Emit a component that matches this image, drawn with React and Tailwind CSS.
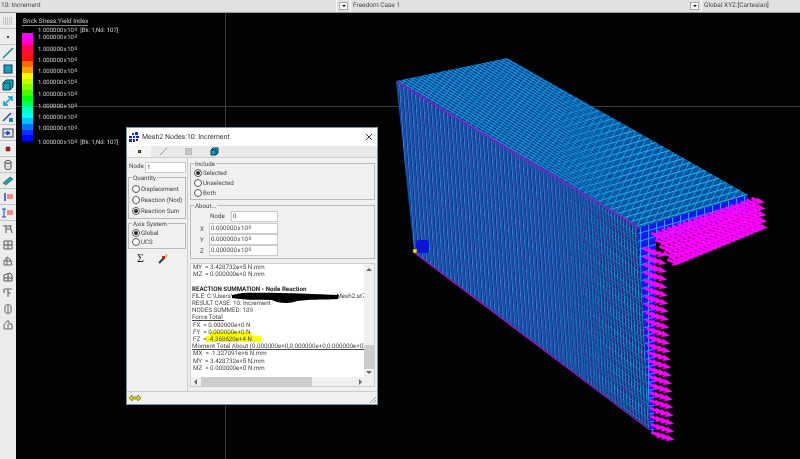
import React from 'react';

const legendRows = [
    { gap: 'mt-[1px]', extra: true },
    { gap: 'mt-[-1px]' }, { gap: 'mt-[4px]' }, { gap: 'mt-[3px]' }, { gap: 'mt-[3px]' }, { gap: 'mt-[3px]' },
    { gap: 'mt-[4px]' }, { gap: 'mt-[4px]' }, { gap: 'mt-[3px]' }, { gap: 'mt-[3px]' },
    { gap: 'mt-[6px]', extra: true },
];

const legendColors = ['#ff00ff', '#ff00d8', '#ff0060', '#ff1020', '#ff1010', '#ff6a00', '#ffa000', '#ffff00', '#c0ff00', '#80ff00', '#40ff00', '#00ff00', '#00ff60', '#00ffc0', '#00ffff', '#00c0ff', '#0070ff', '#0030ff', '#0000ff'];

const Power = ({ value, exp }) => (
    <span className="[word-spacing:-1px]">{value} x 10<sup className="text-[5px] relative top-[-1px] align-baseline ml-[.5px]">{exp}</sup></span>
);

const Tool = ({ children, sep }) => (
    <div className={`h-4 w-full shrink-0 flex items-center justify-center ${sep ? 'border-b border-[#c4c4c4]' : ''}`}>
        <svg width="12" height="12" viewBox="0 0 12 12">{children}</svg>
    </div>
);

const Radio = ({ on, label }) => (
    <div className="flex items-center gap-[1px] h-[8px] leading-[8px]">
        <span className="w-[8px] h-[8px] shrink-0 rounded-full border border-[#555] bg-white flex items-center justify-center">
            {on && <span className="w-[4px] h-[4px] rounded-full bg-[#222]" />}
        </span>
        <span className="whitespace-nowrap">{label}</span>
    </div>
);

const Group = ({ title, className = '', children }) => (
    <div className={`relative border border-[#b9b9b9] ${className}`}>
        <span className="absolute left-[3px] top-[-4px] bg-[#f0f0f0] leading-[8px] px-[1px]">{title}</span>
        {children}
    </div>
);

const Combo = ({ className, label }) => (
    <div className={`flex items-center h-full ${className}`}>
        <div className="w-[9px] h-[8px] bg-white border border-[#aaa] flex items-center justify-center mx-[2px]">
            <span className="w-0 h-0 border-x-[2px] border-t-[2px] border-x-transparent border-t-black" />
        </div>
        <div className="flex-1 h-full pl-[2px] border-l border-white flex items-center">{label}</div>
    </div>
);

// the L shaped mesh, drawn with repeating patterns and a generated set of load arrows
const Model = () => {
    const arrows = [];
    for (let r = 0; r < 5; r++) {
        for (let i = 0; i < 20; i++) {
            const t = i / 19;
            arrows.push([652 + t * 100 + r * 4 * (1 - t * 0.8), 232 - t * 35 + r * 6.6 - t * r * 0.2]);
        }
    }
    for (let i = 0; i < 24; i++) {
        for (let c = 0; c < 3; c++) {
            const y = 247 + i * 8;
            arrows.push([644 + (y - 260) * 0.046 + c * 5, y + c * 1.5]);
        }
    }
    return (
        <svg className="absolute left-0 top-0" width="784" height="446" viewBox="16 13 784 446">
            <defs>
                <pattern id="frontMesh" width="4" height="4" patternUnits="userSpaceOnUse" patternTransform="skewY(34) skewX(4)">
                    <rect width="4" height="4" fill="#0a2c80" />
                    <path d="M0.5 0V4" stroke="#109cd0" strokeWidth="1.2" />
                    <path d="M2.5 0V4" stroke="#1268c0" strokeWidth="1" />
                    <path d="M0 1.5H4" stroke="#b020d8" strokeWidth="0.9" strokeDasharray="1.4 2.6" />
                </pattern>
                <pattern id="frontNear" width="6" height="7" patternUnits="userSpaceOnUse" patternTransform="skewY(37) skewX(3)">
                    <rect width="6" height="7" fill="#0a2a78" />
                    <path d="M0.5 0V7M3.5 0V7" stroke="#1098c8" strokeWidth="1" />
                    <path d="M0 3.5H6" stroke="#a01ccc" strokeWidth="1" strokeDasharray="2 2" />
                    <path d="M0 .5H6" stroke="#1484c0" strokeWidth=".8" />
                </pattern>
                <pattern id="topMesh" width="5" height="3" patternUnits="userSpaceOnUse" patternTransform="skewY(30) skewX(-30)">
                    <rect width="5" height="3" fill="#083e9c" />
                    <path d="M0 .5H5" stroke="#14b8dc" strokeWidth=".9" />
                    <path d="M1 0V3" stroke="#0b8ecb" strokeWidth="1" />
                </pattern>
                <pattern id="topNear" width="8" height="6" patternUnits="userSpaceOnUse" patternTransform="skewY(-16) skewX(-30)">
                    <rect width="8" height="6" fill="#0850a8" />
                    <path d="M0 .5H8" stroke="#18c0e0" strokeWidth="1" />
                    <path d="M1 0V6" stroke="#18b0d8" strokeWidth="1" />
                </pattern>
                <pattern id="endMesh" width="8" height="8" patternUnits="userSpaceOnUse" patternTransform="skewY(-16)">
                    <rect width="8" height="8" fill="#1515f0" />
                    <path d="M0 .5H8M.5 0V8" stroke="#28a0f0" strokeWidth="1" />
                </pattern>
                {/* fades the coarser near mesh into the dense far one */}
                <linearGradient id="nearFade" gradientUnits="userSpaceOnUse" x1="540" y1="0" x2="630" y2="0">
                    <stop offset="0" stopColor="#000" />
                    <stop offset="1" stopColor="#fff" />
                </linearGradient>
                <mask id="nearMask" maskUnits="userSpaceOnUse" x="396" y="50" width="400" height="400">
                    <rect x="396" y="50" width="400" height="400" fill="url(#nearFade)" />
                </mask>
            </defs>
            {/* top slab */}
            <polygon points="396,81 507,58 748,195 638,228" fill="url(#topMesh)" />
            <polygon points="396,81 507,58 748,195 638,228" fill="url(#topNear)" mask="url(#nearMask)" />
            {/* main face */}
            <polygon points="396,81 638,228 650,429 414,252" fill="url(#frontMesh)" />
            <polygon points="396,81 638,228 650,429 414,252" fill="url(#frontNear)" mask="url(#nearMask)" />
            {/* end faces */}
            <polygon points="638,228 748,195 749,210 656,242 654,434 650,429" fill="url(#endMesh)" />
            <path d="M397 82L640 228" stroke="#7a20c8" strokeWidth="2" />
            <path d="M415 253L650 430" stroke="#8a18c0" strokeWidth="1.5" />
            <g>
                {arrows.map(([x, y], i) => (
                    <path key={i} d={`M${x} ${y}L${x + 6} ${y + 2.6}L${x + 5} ${y + 0.6}L${x + 12.5} ${y + 5.5}L${x + 4} ${y + 7}L${x + 5.5} ${y + 5}L${x - 1} ${y + 2.4}z`} fill="#ff00ff" stroke="#ff00ff" strokeWidth=".3" />
                ))}
            </g>
            <rect x="416" y="240" width="13" height="13" rx="3" fill="#0a12d8" />
            <rect x="413" y="249" width="4" height="4" fill="#f5e400" stroke="#333" strokeWidth="0.5" />
        </svg>
    );
};

export default function App() {
    return (
        <div className="w-[800px] h-[459px] overflow-hidden bg-black flex flex-col font-['Roboto',sans-serif] text-[6.2px] text-[#444] [text-rendering:geometricPrecision] opacity-[.99]">
            {/* top combo strip */}
            <div className="h-[13px] shrink-0 bg-[#e1e1e1] flex items-center text-[6.5px] text-[#444] border-b border-[#999]">
                <div className="w-[337px] pl-[1px] border-r border-white h-full flex items-center">10: Increment</div>
                <Combo className="w-[351px]" label="Freedom Case 1" />
                <Combo className="flex-1" label="Global XYZ:[Cartesian]" />
            </div>
            <div className="flex-1 flex min-h-0">
                {/* left toolbar */}
                <div className="w-4 shrink-0 bg-[#ececec] flex flex-col">
                    <Tool sep><path d="M1 3h10M1 5h10M1 7h10M1 9h10" stroke="#999" strokeDasharray="1 1" /></Tool>
                    <Tool sep><rect x="5" y="5" width="2" height="2" fill="#444" /></Tool>
                    <Tool sep><path d="M1 11L11 1" stroke="#0e7f8f" strokeWidth="1.2" /></Tool>
                    <Tool sep><rect x="2" y="2" width="8" height="8" fill="#00a9b5" stroke="#235" /></Tool>
                    <Tool sep><path d="M1 4h7v7H1zM1 4l3-3h7v7l-3 3" fill="#00a9b5" stroke="#235" /></Tool>
                    <Tool sep><path d="M2 10L10 2M6 2h4v4M2 6v4h4" fill="none" stroke="#00a0d0" strokeWidth="1.5" /></Tool>
                    <Tool sep><path d="M1 10L9 2" stroke="#1840c0" strokeWidth="1.5" /><rect x="7" y="7" width="4" height="4" fill="#1a8a8a" /></Tool>
                    <Tool sep><rect x="1" y="2" width="10" height="8" fill="#dfe6f2" stroke="#345" /><path d="M2 6h5M5 4l3 2-3 2z" fill="#1840c0" stroke="#1840c0" /></Tool>
                    <Tool sep><rect x="4" y="4" width="4" height="4" fill="#c01818" stroke="#333" strokeWidth=".5" /></Tool>
                    <Tool sep><path d="M3 3v6c0 2 6 2 6 0V3c0-2-6-2-6 0c0 2 6 2 6 0" fill="#ddd" stroke="#555" /></Tool>
                    <Tool sep><path d="M1 8L8 2l3 2-7 6z" fill="#18a0a0" stroke="#135" strokeWidth=".5" /></Tool>
                    <Tool sep><path d="M3 2v8" stroke="#2040d0" strokeWidth="1.5" /><rect x="5" y="3" width="6" height="5" fill="#f08888" /></Tool>
                    <Tool sep><path d="M2 2v8M0 2h4M0 10h4" stroke="#2040d0" /><rect x="5" y="3" width="6" height="5" fill="#f08888" /></Tool>
                    <Tool><path d="M1 3h9M4 3v7M8 3l2 7M4 6h5" fill="none" stroke="#555" /></Tool>
                    <Tool><path d="M2 2h8v8H2zM6 2v8M2 6h8" fill="none" stroke="#555" /></Tool>
                    <Tool><path d="M2 10V6l3-4 3 2 2 6zM5 2v8M2 6h8" fill="none" stroke="#666" /></Tool>
                    <Tool><path d="M2 4l6-2 2 2v6H2zM6 3v7M2 7h8" fill="none" stroke="#555" /></Tool>
                    <Tool><path d="M2 2h8M6 2v4M2 2v4M6 6h3M6 6v4" fill="none" stroke="#666" strokeWidth="1.2" /></Tool>
                    <Tool><path d="M3 3c2-2 4-2 6 0v6c-2 2-4 2-6 0zM6 2v8" fill="none" stroke="#666" /></Tool>
                    <Tool><path d="M2 6l3-4h2v3h3v5H2zM6 5v5" fill="none" stroke="#666" /></Tool>
                </div>
                {/* graphics viewport */}
                <div className="relative flex-1 bg-black text-[#cfcfcf]">
                    <div className="absolute left-0 right-0 top-[93px] h-px bg-[#3a3a3a]" />
                    <div className="absolute top-0 bottom-0 left-[209px] w-px bg-[#3a3a3a]" />
                    <Model />
                    {/* legend */}
                    <div className="relative w-[115px] pl-[6px] pt-[4px]">
                        <div className="w-[66px] pl-[1px] border-b border-[#888] text-[6.3px] leading-[8px] whitespace-nowrap">Brick Stress:Yield Index</div>
                        <div className="flex">
                            <div className="w-[11px] h-[108px] mt-[7px] shrink-0 flex flex-col">
                                {legendColors.map((c) => (
                                    <div key={c} className="flex-1" style={{ background: c }} />
                                ))}
                            </div>
                            <div className="ml-[5px] leading-[8px] whitespace-nowrap text-[6px]">
                                {legendRows.map((r, i) => (
                                    <div key={i} className={`${r.gap} h-[8px]`}>
                                        <Power value="1.000000" exp="0" />
                                        {r.extra && <span className="ml-[3px]">[Bk: 1,Nd: 107]</span>}
                                    </div>
                                ))}
                            </div>
                        </div>
                    </div>
                    {/* result window */}
                    <div className="absolute left-[110px] top-[114px] w-[252px] h-[278px] bg-[#f0f0f0] border border-[#6b93b8] text-[#444] flex flex-col">
                        <div className="h-[18px] shrink-0 bg-white flex items-center pl-[2px] text-[#333] text-[7px]">
                            <svg width="10" height="10" viewBox="0 0 10 10" className="mr-[3px]">
                                <path d="M6 0h3v3H6zM3 1h2v2H3zM0 4h3v2H0zM4 4h2v2H4zM7 4h3v2H7zM0 7h3v3H0zM4 7h2v3H4zM7 7h2v2H7z" fill="#1420c8" />
                            </svg>
                            Mesh2 Nodes:10: Increment
                            <svg width="8" height="8" viewBox="0 0 8 8" className="ml-auto mr-[4px]"><path d="M1 1l6 6M7 1L1 7" stroke="#333" /></svg>
                        </div>
                        <div className="h-[12px] shrink-0 flex items-center bg-[#e9e9e9] border-b border-[#ccc]">
                            <div className="w-[24px] h-full bg-[#f6f6f6] flex items-center justify-center">
                                <span className="w-[3px] h-[3px] bg-[#b89000] border border-[#333]" />
                            </div>
                            <div className="w-[25px] flex justify-center"><svg width="9" height="9" viewBox="0 0 9 9"><path d="M1 8L8 1" stroke="#999" /></svg></div>
                            <div className="w-[25px] flex justify-center"><span className="w-[7px] h-[7px] bg-[#c4c4c4] border border-[#bbb]" /></div>
                            <div className="w-[26px] flex justify-center"><svg width="9" height="9" viewBox="0 0 9 9"><path d="M1 3h5v5H1zM1 3l2-2h5v5l-2 2" fill="#00a9b5" stroke="#135" /></svg></div>
                        </div>
                        <div className="flex-1 flex min-h-0">
                            <div className="w-[61px] shrink-0 border-r border-[#ccc] pl-[1px] pr-[1px] pt-[3px]">
                                <div className="flex items-center gap-[1px] h-[12px]">
                                    <span className="pl-[1px] w-[16px]">Node</span>
                                    <span className="flex-1 h-[11px] bg-white border border-[#ccc] leading-[9px] pl-[1px]">1</span>
                                </div>
                                <Group title="Quantity" className="mt-[4px] h-[42px] pt-[7px] pl-[3px] flex flex-col gap-[3px]">
                                    <Radio label="Displacement" />
                                    <Radio label="Reaction (Nod)" />
                                    <Radio on label="Reaction Sum" />
                                </Group>
                                <Group title="Axis System" className="mt-[4px] h-[26px] pt-[5px] pl-[3px] flex flex-col gap-[1px]">
                                    <Radio on label="Global" />
                                    <Radio label="UCS" />
                                </Group>
                                <div className="flex mt-[3px] h-[12px] items-center">
                                    <span className="ml-[9px] text-[12px] leading-[12px] font-['Liberation_Serif',serif] text-[#222]">Σ</span>
                                    <svg width="11" height="11" viewBox="0 0 11 11" className="ml-[14px]">
                                        <path d="M1 10L7 4" stroke="#333" strokeWidth="2" />
                                        <path d="M7 1l3 1-2 3z" fill="#e8c000" />
                                        <path d="M4 3h3v2H4z" fill="#d02020" />
                                    </svg>
                                </div>
                            </div>
                            <div className="flex-1 min-w-0 pl-[2px] pr-[2px] pt-[5px] flex flex-col">
                                <Group title="Include" className="h-[37px] pt-[5px] pl-[3px] flex flex-col gap-[2px]">
                                    <Radio on label="Selected" />
                                    <Radio label="Unselected" />
                                    <Radio label="Both" />
                                </Group>
                                <Group title="About..." className="mt-[5px] h-[54px] pl-[7px] pt-[5px] flex flex-col">
                                    <div className="flex items-center h-[11px] mb-[1px]">
                                        <span className="ml-[12px] w-[21px]">Node</span>
                                        <span className="w-[47px] h-[11px] bg-white border border-[#ccc] leading-[9px] pl-[1px]">0</span>
                                    </div>
                                    {['X', 'Y', 'Z'].map((a) => (
                                        <div key={a} className="flex items-center h-[11px]">
                                            <span className="w-[11px] pl-[2px] pt-[2px]">{a}</span>
                                            <span className="w-[69px] h-[11px] bg-white border border-[#ccc] leading-[9px] pl-[1px]"><Power value="0.000000" exp="0" /></span>
                                        </div>
                                    ))}
                                </Group>
                                <div className="relative mt-[4px] h-[124px] bg-white border border-[#ccc] overflow-hidden leading-[7.2px]">
                                    {/* highlighter marks on FY / FZ */}
                                    <div className="absolute left-[19px] top-[68px] w-[42px] h-[4px] bg-[#ffff00]" />
                                    <div className="absolute left-[15px] top-[72px] w-[55px] h-[6px] bg-[#ffff00]" />
                                    <div className="relative pl-[1px] pt-[0px] whitespace-nowrap">
                                        <div className="pl-[1px]">MY &nbsp;= 3.428732e+5 N.mm</div>
                                        <div className="pl-[1px]">MZ &nbsp;= 0.000000e+0 N.mm</div>
                                        <div className="h-[7.2px]" />
                                        <div className="font-bold text-[#222]">REACTION SUMMATION - Node Reaction</div>
                                        <div className="flex">FILE: C:\Users\<span className="ml-[103px]">Mesh2.st7</span></div>
                                        <div>RESULT CASE: 10: Increment</div>
                                        <div>NODES SUMMED: 189</div>
                                        <div className="underline">Force Total&nbsp;</div>
                                        <div className="pl-[1px]">FX &nbsp;= 0.000000e+0 N</div>
                                        <div className="pl-[1px]">FY &nbsp;= 0.000000e+0 N</div>
                                        <div className="pl-[1px]">FZ &nbsp;= -4.368620e+4 N</div>
                                        <div className="underline">Moment Total About (0.000000e+0,0.000000e+0,0.000000e+0)</div>
                                        <div className="pl-[1px]">MX &nbsp;= -1.327091e+6 N.mm</div>
                                        <div className="pl-[1px]">MY &nbsp;= 3.428732e+5 N.mm</div>
                                        <div className="pl-[1px]">MZ &nbsp;= 0.000000e+0 N.mm</div>
                                    </div>
                                    {/* scribble over the file path */}
                                    <svg className="absolute left-[41px] top-[28px]" width="108" height="12" viewBox="0 0 108 12">
                                        <path d="M0 3L10 1C40 0 80 2 107 3L106 7C90 8 70 7 62 10C55 12 45 11 40 8C25 8 10 8 0 6z" fill="#000" />
                                    </svg>
                                    {/* vertical scrollbar */}
                                    <div className="absolute right-0 top-0 bottom-0 w-[10px] bg-[#f0f0f0] flex flex-col items-center justify-between">
                                        <span className="mt-[4px] w-0 h-0 border-x-[3px] border-b-[3px] border-x-transparent border-b-[#666]" />
                                        <div className="absolute left-0 right-0 top-[81px] h-[24px] bg-[#cdcdcd]" />
                                        <span className="mb-[12px] w-0 h-0 border-x-[3px] border-t-[3px] border-x-transparent border-t-[#666]" />
                                    </div>
                                    {/* horizontal scrollbar */}
                                    <div className="absolute left-0 right-0 bottom-0 h-[9px] bg-[#f0f0f0] flex items-center justify-between px-[3px]">
                                        <span className="w-0 h-0 border-y-[3px] border-r-[3px] border-y-transparent border-r-[#666]" />
                                        <div className="absolute left-[10px] w-[111px] top-0 bottom-0 bg-[#cdcdcd]" />
                                        <span className="w-0 h-0 border-y-[3px] border-l-[3px] border-y-transparent border-l-[#666] mr-[9px]" />
                                    </div>
                                </div>
                            </div>
                        </div>
                        <div className="relative h-[13px] shrink-0 border-t border-[#ccc] flex items-center pl-[2px]">
                            <svg width="12" height="8" viewBox="0 0 12 8"><path d="M0 4l3-3v2h6V1l3 3-3 3V5H3v2z" fill="#f0e000" stroke="#444" strokeWidth=".6" /></svg>
                            <svg width="8" height="8" viewBox="0 0 8 8" className="absolute right-0 bottom-0"><path d="M7 1L1 7M7 4L4 7M7 6.5L6.5 7" stroke="#999" /></svg>
                        </div>
                    </div>
                </div>
            </div>
        </div>
    );
}
